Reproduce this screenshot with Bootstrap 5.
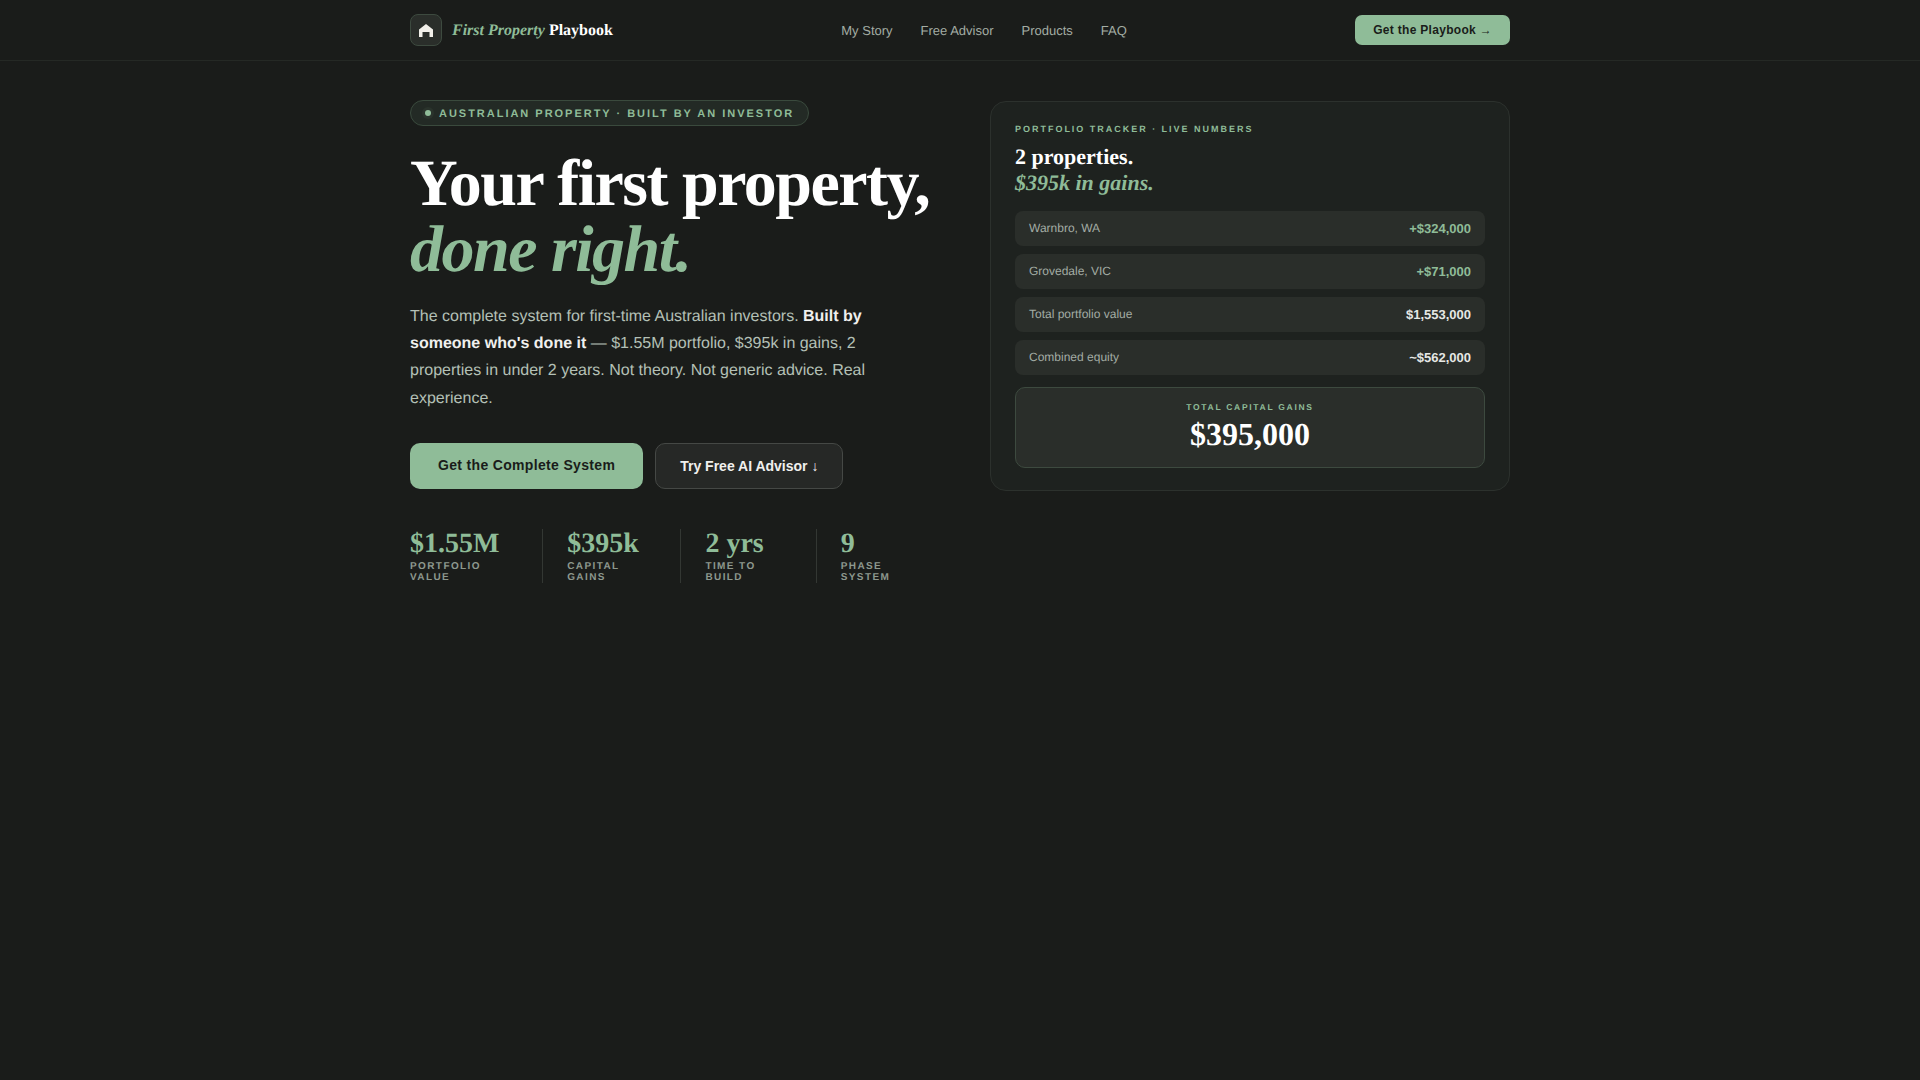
<!DOCTYPE html>
<html lang="en">
<head>
    <meta charset="UTF-8">
    <meta name="viewport" content="width=device-width, initial-scale=1.0">
    <title>First Property Playbook</title>
    <link href="https://cdn.jsdelivr.net/npm/bootstrap@5.3.0/dist/css/bootstrap.min.css" rel="stylesheet">
    <style>
        body {
            background-color: #1a1c1a;
            font-family: "Liberation Sans", Arial, sans-serif;
            color: #fff;
            min-height: 1080px;
            text-rendering: geometricPrecision;
        }
        .wrap { width: 1100px; }
        .serif { font-family: "Liberation Serif", "Times New Roman", serif; }
        .accent { color: #8fbc98; }

        .top-nav {
            border-bottom: 1px solid #252925;
            padding: 14px 0;
        }
        .logo-box {
            width: 32px;
            height: 32px;
            border-radius: 8px;
            background: #2a2e2a;
            border: 1px solid #3d4a3f;
        }
        .brand { font-size: 16px; line-height: 1; color: #fff; text-decoration: none; font-weight: 700; gap: 10px; }
        .brand-text { padding-top: 1px; }
        .nav-links { gap: 28px; }
        .nav-links a { font-size: 13px; line-height: 20px; padding-top: 1px; color: #a3aca4; text-decoration: none; }
        .btn-nav {
            background: #8fbc98;
            color: #1a1c1a;
            font-size: 12px;
            font-weight: 700;
            letter-spacing: .025em;
            border: 0;
            border-radius: 7px;
            padding: 0 18px;
            height: 30px;
        }

        .hero {
            display: grid;
            grid-template-columns: 1fr 1fr;
            gap: 60px;
            padding-top: 39px;
        }
        .pill {
            height: 26px;
            padding: 2px 14px 0;
            border-radius: 13px;
            background: #232a25;
            border: 1px solid #3a4a3d;
            font-size: 11px;
            font-weight: 700;
            letter-spacing: .18em;
            color: #8fbc98;
        }
        .pill i {
            width: 6px;
            height: 6px;
            margin-top: -2px;
            border-radius: 50%;
            background: #8fbc98;
            box-shadow: 0 0 0 3px #2a332c;
        }
        h1.hero-title {
            font-size: 66px;
            line-height: 66px;
            font-weight: 700;
            letter-spacing: -1.5px;
            white-space: nowrap;
            margin: 25px 0 20px;
        }
        h1.hero-title em { color: #8fbc98; }
        .lead-text {
            font-size: 16px;
            line-height: 27.2px;
            color: #b4c0b6;
            max-width: 480px;
            margin-bottom: 31px;
        }
        .lead-text strong { color: #f0f0ee; }
        .btn-main {
            background: #8fbc98;
            color: #1a1c1a;
            font-size: 14px;
            font-weight: 700;
            letter-spacing: .33px;
            border: 0;
            border-radius: 10px;
            height: 46px;
            padding: 0 28px;
        }
        .btn-ghost {
            background: #262826;
            color: #f0f0ee;
            font-size: 14px;
            font-weight: 700;
            border: 1px solid #454845;
            border-radius: 10px;
            height: 46px;
            padding: 2px 24px 0;
        }
        .cta-row { gap: 12px; }
        .stats { margin-top: 40px; }
        .stat { padding-right: 24px; margin-right: 24px; border-right: 1px solid #333733; }
        .stat:last-child { border-right: 0; padding-right: 0; margin-right: 0; }
        .stat-num { font-size: 28px; line-height: 28px; font-weight: 700; color: #8fbc98; margin-top: 1px; margin-bottom: 3px; }
        .stat-label { font-size: 10px; line-height: 11px; font-weight: 700; letter-spacing: .14em; color: #8d988e; }

        .tracker {
            height: 390px;
            margin-top: 1px;
            padding: 22px 24px 24px;
            background: #1e221f;
            border: 1px solid #2c312d;
            border-radius: 16px;
        }
        .tracker-label { font-size: 9px; line-height: 10px; font-weight: 700; letter-spacing: .22em; color: #8fbc98; margin-bottom: 10px; }
        .tracker-title { font-size: 22px; line-height: 26px; font-weight: 700; margin-bottom: 15px; }
        .tracker-title em { color: #8fbc98; }
        .row-line {
            height: 35px;
            padding: 0 14px;
            margin-bottom: 8px;
            border-radius: 8px;
            background: #2a2e2a;
        }
        .row-line span { font-size: 12px; color: #a3aca4; margin-top: -2px; }
        .row-line b { font-size: 13px; color: #e6e8e5; }
        .row-line b.accent { color: #8fbc98; }
        .total-box {
            height: 81px;
            margin-top: 12px;
            border-radius: 10px;
            background: #2a2e2a;
            border: 1px solid #3d4a3f;
            padding-top: 14px;
        }
        .total-label { font-size: 8.5px; line-height: 10px; font-weight: 700; letter-spacing: .2em; color: #8fbc98; }
        .total-num { font-size: 32px; line-height: 36px; font-weight: 700; margin-top: 4px; }
    </style>
</head>
<body>
    <nav class="top-nav">
        <div class="wrap mx-auto d-flex align-items-center justify-content-between">
            <a class="brand serif d-flex align-items-center" href="#">
                <span class="logo-box d-flex align-items-center justify-content-center">
                    <svg width="14" height="13" viewBox="0 0 14 13">
                        <path fill="#f1efe9" d="M7 0 14 5.5V13H10.5V8H3.5V13H0V5.5Z"/>
                    </svg>
                </span>
                <span class="brand-text"><em class="accent">First Property</em> Playbook</span>
            </a>
            <div class="nav-links d-flex">
                <a href="#">My Story</a>
                <a href="#">Free Advisor</a>
                <a href="#">Products</a>
                <a href="#">FAQ</a>
            </div>
            <button class="btn btn-nav" type="button">Get the Playbook →</button>
        </div>
    </nav>

    <main class="wrap mx-auto hero">
        <section>
            <div class="pill d-inline-flex align-items-center gap-2">
                <i></i>AUSTRALIAN PROPERTY · BUILT BY AN INVESTOR
            </div>
            <h1 class="hero-title serif">Your first property,<br><em>done right.</em></h1>
            <p class="lead-text">The complete system for first-time Australian investors. <strong>Built by someone who's done it</strong> — $1.55M portfolio, $395k in gains, 2 properties in under 2 years. Not theory. Not generic advice. Real experience.</p>
            <div class="d-flex cta-row">
                <button class="btn btn-main" type="button">Get the Complete System</button>
                <button class="btn btn-ghost" type="button">Try Free AI Advisor ↓</button>
            </div>
            <div class="stats d-flex">
                <div class="stat">
                    <div class="stat-num serif">$1.55M</div>
                    <div class="stat-label">PORTFOLIO VALUE</div>
                </div>
                <div class="stat">
                    <div class="stat-num serif">$395k</div>
                    <div class="stat-label">CAPITAL GAINS</div>
                </div>
                <div class="stat">
                    <div class="stat-num serif">2 yrs</div>
                    <div class="stat-label">TIME TO BUILD</div>
                </div>
                <div class="stat">
                    <div class="stat-num serif">9</div>
                    <div class="stat-label">PHASE SYSTEM</div>
                </div>
            </div>
        </section>

        <aside class="tracker">
            <div class="tracker-label">PORTFOLIO TRACKER · LIVE NUMBERS</div>
            <div class="tracker-title serif">2 properties.<br><em>$395k in gains.</em></div>
            <div class="row-line d-flex align-items-center justify-content-between"><span>Warnbro, WA</span><b class="accent">+$324,000</b></div>
            <div class="row-line d-flex align-items-center justify-content-between"><span>Grovedale, VIC</span><b class="accent">+$71,000</b></div>
            <div class="row-line d-flex align-items-center justify-content-between"><span>Total portfolio value</span><b>$1,553,000</b></div>
            <div class="row-line d-flex align-items-center justify-content-between"><span>Combined equity</span><b>~$562,000</b></div>
            <div class="total-box text-center">
                <div class="total-label">TOTAL CAPITAL GAINS</div>
                <div class="total-num serif">$395,000</div>
            </div>
        </aside>
    </main>

    <script src="https://cdn.jsdelivr.net/npm/bootstrap@5.3.0/dist/js/bootstrap.bundle.min.js"></script>
</body>
</html>
